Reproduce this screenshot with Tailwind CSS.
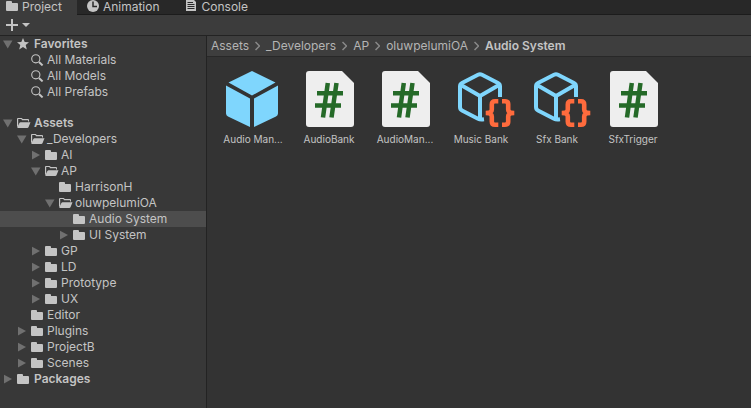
<!DOCTYPE html>
<html lang="en">
<head>
    <meta charset="utf-8">
    <meta name="viewport" content="width=device-width, initial-scale=1">
    <title>Project</title>
    <script src="https://cdn.jsdelivr.net/npm/@tailwindcss/browser@4"></script>
</head>
<body class="flex flex-col h-screen overflow-hidden bg-[#383838] text-[#c4c4c4] text-[12px] leading-4 font-['Inter',sans-serif]">

    <!-- icons -->
    <svg class="hidden">
        <symbol id="folder" viewBox="0 0 14 12">
            <path fill="#c4c4c4" d="M0 2q0-1 1-1h4q1 0 1 1v1h5q1 0 1 1v6q0 1-1 1H1q-1 0-1-1z"/>
        </symbol>
        <symbol id="folder-open" viewBox="0 0 14 12">
            <path fill="#c4c4c4" d="M0 2q0-1 1-1h3.500q1 0 1 1H11q1 0 1 1v1.500h-1V3.200H5L4.300 2H1.200v7L0 10z"/>
            <path fill="#c4c4c4" d="M3.600 5.200H13.500L11.600 10q-.4 1-1.400 1H1q-1 0-.6-1l2-4q.4-.8 1.200-.8z"/>
        </symbol>
        <symbol id="search" viewBox="0 0 14 12">
            <circle cx="4.800" cy="4.800" r="4.100" fill="none" stroke="#c4c4c4" stroke-width="1.100"/>
            <path stroke="#c4c4c4" stroke-width="2" d="M8 8l3.600 3.400"/>
        </symbol>
        <symbol id="star" viewBox="0 0 14 12">
            <path fill="#c4c4c4" d="M6 0l1.700 4 4.300.3L8.700 7.100l1.100 4.300L6 9.100l-3.800 2.300 1.100-4.300L0 4.300 4.300 4z"/>
        </symbol>
        <symbol id="down" viewBox="0 0 10 10">
            <path fill="#707070" d="M0 1.500h9.500L4.750 9.500z"/>
        </symbol>
        <symbol id="right" viewBox="0 0 10 10">
            <path fill="#707070" d="M1 .7v8.800l8-4.400z"/>
        </symbol>
        <symbol id="chevron" viewBox="0 0 5 10">
            <path fill="none" stroke="#8a8a8a" stroke-width="1.500" d="M.5 1l4 4-4 4"/>
        </symbol>
        <symbol id="prefab" viewBox="0 0 68 64">
            <path fill="#7fd6fd" d="M33 3L56.500 14.500 33 27.500 9.500 14.500zM7 17.500L31 30.500V59L9 48.500Q7 47.500 7 45.500zM59 17.500L35 30.500V59L57 48.500Q59 47.500 59 45.500z"/>
        </symbol>
        <symbol id="script" viewBox="0 0 68 64">
            <path fill="#eee" d="M14 3H47L59 15V56q0 3-3 3H14q-3 0-3-3V6q0-3 3-3z"/>
            <path fill="none" stroke="#256a28" stroke-width="4.500" d="M32.800 15L28 49.500M41.500 15L36.500 49.500M22 25.200H48M20 37.500H46"/>
        </symbol>
        <symbol id="scriptable" viewBox="0 0 68 64">
            <path fill="none" stroke="#7fd6fd" stroke-width="4" stroke-linejoin="round" d="M53 29V18.500Q53 16 51 15L35 6.800Q33 5.800 31 6.800L15 15Q13 16 13 18.500V39Q13 41.500 15 42.500L31 50.800Q33 51.800 37 51.300M14 17L33 28 52 17M33 28V51"/>
            <path fill="none" stroke="#ff6b3d" stroke-width="4.600" d="M51.300 33.300H48Q44.800 33.300 44.800 36.500V41.500Q44.800 45 38.700 45Q44.800 45 44.800 48.500V53.500Q44.800 56.700 48 56.700H51.300M55 33.300H58Q61.200 33.300 61.200 36.500V41.500Q61.200 45 67.300 45Q61.200 45 61.200 48.500V53.500Q61.200 56.700 58 56.700H55"/>
        </symbol>
    </svg>

    <!-- tabs -->
    <nav class="flex h-[15px] shrink-0 bg-[#282828] overflow-hidden" role="tablist">
        <button type="button" role="tab" aria-selected="true" class="flex gap-1 pl-[6px] pr-[15px] bg-[#3c3c3c] h-full">
            <svg class="w-3 h-3 shrink-0" viewBox="0 0 12 12"><path fill="#c4c4c4" d="M0 2q0-1 1-1h4q1 0 1 1v1h5q1 0 1 1v6q0 1-1 1H1q-1 0-1-1z"/></svg>
            <span class="-mt-px">Project</span>
        </button>
        <button type="button" role="tab" class="flex gap-1 pl-[10px] pr-[15px] border-b border-[#1c1c1c] h-full">
            <svg class="w-3 h-3 shrink-0" viewBox="0 0 12 12"><circle cx="6" cy="6" r="6" fill="#c4c4c4"/><path fill="none" stroke="#282828" stroke-width="1.500" d="M6 1.500V6.500H10"/></svg>
            <span class="-mt-px">Animation</span>
        </button>
        <button type="button" role="tab" class="flex gap-1 pl-[11px] pr-4 border-b border-[#1c1c1c] h-full">
            <svg class="w-3 h-3 shrink-0" viewBox="0 0 12 12"><path fill="#c4c4c4" d="M0 0H8L10 2V11H0z"/><path stroke="#282828" d="M1.500 2.500H7M1.500 4.500H8.500M1.500 6.500H8.500M1.500 8.500H8.500"/></svg>
            <span class="-mt-px">Console</span>
        </button>
        <div class="flex-1 border-b border-[#1c1c1c]"></div>
    </nav>

    <!-- toolbar -->
    <div class="flex items-center h-[21px] shrink-0 pl-[6px] bg-[#3c3c3c] border-b border-[#232323]">
        <button type="button" aria-label="Create" class="flex items-center gap-1">
            <svg class="w-3 h-3" viewBox="0 0 12 12"><path stroke="#c4c4c4" stroke-width="2" d="M6 0V12M0 6H12"/></svg>
            <svg class="w-2 h-1" viewBox="0 0 8 4"><path fill="#c4c4c4" d="M0 0H8L4 4z"/></svg>
        </button>
    </div>

    <main class="flex flex-1 min-h-0">

        <!-- folder tree -->
        <aside class="w-[207px] shrink-0 border-r border-[#232323] bg-[#383838] whitespace-nowrap">
            <ul class="mb-[15px]">
                <li class="flex items-center h-4 pl-[3px]"><button type="button" aria-label="Collapse" class="w-[14px]"><svg class="w-[10px] h-[10px]"><use href="#down"/></svg></button><svg class="w-[14px] h-3 mr-[3px]"><use href="#star"/></svg><a href="#" class="font-semibold">Favorites</a></li>
                <li class="flex items-center h-4 pl-[31px]"><svg class="w-[14px] h-3 mr-[2px]"><use href="#search"/></svg><a href="#">All Materials</a></li>
                <li class="flex items-center h-4 pl-[31px]"><svg class="w-[14px] h-3 mr-[2px]"><use href="#search"/></svg><a href="#">All Models</a></li>
                <li class="flex items-center h-4 pl-[31px]"><svg class="w-[14px] h-3 mr-[2px]"><use href="#search"/></svg><a href="#">All Prefabs</a></li>
            </ul>
            <ul>
                <li class="flex items-center h-4 pl-[3px]"><button type="button" aria-label="Collapse" class="w-[14px]"><svg class="w-[10px] h-[10px]"><use href="#down"/></svg></button><svg class="w-[14px] h-3 mr-[3px]"><use href="#folder-open"/></svg><a href="#" class="font-semibold">Assets</a></li>
                <li class="flex items-center h-4 pl-[17px]"><button type="button" aria-label="Collapse" class="w-[14px]"><svg class="w-[10px] h-[10px]"><use href="#down"/></svg></button><svg class="w-[14px] h-3 mr-[2px]"><use href="#folder-open"/></svg><a href="#">_Developers</a></li>
                <li class="flex items-center h-4 pl-[31px]"><button type="button" aria-label="Expand" class="w-[14px]"><svg class="w-[10px] h-[10px]"><use href="#right"/></svg></button><svg class="w-[14px] h-3 mr-[2px]"><use href="#folder"/></svg><a href="#">AI</a></li>
                <li class="flex items-center h-4 pl-[31px]"><button type="button" aria-label="Collapse" class="w-[14px]"><svg class="w-[10px] h-[10px]"><use href="#down"/></svg></button><svg class="w-[14px] h-3 mr-[2px]"><use href="#folder-open"/></svg><a href="#">AP</a></li>
                <li class="flex items-center h-4 pl-[59px]"><svg class="w-[14px] h-3 mr-[2px]"><use href="#folder"/></svg><a href="#">HarrisonH</a></li>
                <li class="flex items-center h-4 pl-[45px]"><button type="button" aria-label="Collapse" class="w-[14px]"><svg class="w-[10px] h-[10px]"><use href="#down"/></svg></button><svg class="w-[14px] h-3 mr-[2px]"><use href="#folder-open"/></svg><a href="#">oluwpelumiOA</a></li>
                <li class="flex items-center h-4 pl-[73px] bg-[#4d4d4d]"><svg class="w-[14px] h-3 mr-[2px]"><use href="#folder"/></svg><a href="#" aria-current="true">Audio System</a></li>
                <li class="flex items-center h-4 pl-[59px]"><button type="button" aria-label="Expand" class="w-[14px]"><svg class="w-[10px] h-[10px]"><use href="#right"/></svg></button><svg class="w-[14px] h-3 mr-[2px]"><use href="#folder"/></svg><a href="#">UI System</a></li>
                <li class="flex items-center h-4 pl-[31px]"><button type="button" aria-label="Expand" class="w-[14px]"><svg class="w-[10px] h-[10px]"><use href="#right"/></svg></button><svg class="w-[14px] h-3 mr-[2px]"><use href="#folder"/></svg><a href="#">GP</a></li>
                <li class="flex items-center h-4 pl-[31px]"><button type="button" aria-label="Expand" class="w-[14px]"><svg class="w-[10px] h-[10px]"><use href="#right"/></svg></button><svg class="w-[14px] h-3 mr-[2px]"><use href="#folder"/></svg><a href="#">LD</a></li>
                <li class="flex items-center h-4 pl-[31px]"><button type="button" aria-label="Expand" class="w-[14px]"><svg class="w-[10px] h-[10px]"><use href="#right"/></svg></button><svg class="w-[14px] h-3 mr-[2px]"><use href="#folder"/></svg><a href="#">Prototype</a></li>
                <li class="flex items-center h-4 pl-[31px]"><button type="button" aria-label="Expand" class="w-[14px]"><svg class="w-[10px] h-[10px]"><use href="#right"/></svg></button><svg class="w-[14px] h-3 mr-[2px]"><use href="#folder"/></svg><a href="#">UX</a></li>
                <li class="flex items-center h-4 pl-[31px]"><svg class="w-[14px] h-3 mr-[2px]"><use href="#folder"/></svg><a href="#">Editor</a></li>
                <li class="flex items-center h-4 pl-[17px]"><button type="button" aria-label="Expand" class="w-[14px]"><svg class="w-[10px] h-[10px]"><use href="#right"/></svg></button><svg class="w-[14px] h-3 mr-[2px]"><use href="#folder"/></svg><a href="#">Plugins</a></li>
                <li class="flex items-center h-4 pl-[17px]"><button type="button" aria-label="Expand" class="w-[14px]"><svg class="w-[10px] h-[10px]"><use href="#right"/></svg></button><svg class="w-[14px] h-3 mr-[2px]"><use href="#folder"/></svg><a href="#">ProjectB</a></li>
                <li class="flex items-center h-4 pl-[17px]"><button type="button" aria-label="Expand" class="w-[14px]"><svg class="w-[10px] h-[10px]"><use href="#right"/></svg></button><svg class="w-[14px] h-3 mr-[2px]"><use href="#folder"/></svg><a href="#">Scenes</a></li>
                <li class="flex items-center h-4 pl-[3px]"><button type="button" aria-label="Expand" class="w-[14px]"><svg class="w-[10px] h-[10px]"><use href="#right"/></svg></button><svg class="w-[14px] h-3 mr-[3px]"><use href="#folder"/></svg><a href="#" class="font-semibold">Packages</a></li>
            </ul>
        </aside>

        <!-- folder contents -->
        <section class="flex-1 min-w-0 bg-[#333]">
            <nav class="flex items-center gap-[6px] h-[21px] pl-1 bg-[#3e3e3e] border-b border-[#282828] text-[#b4b4b4] whitespace-nowrap">
                <a href="#">Assets</a>
                <svg class="w-[5px] h-[10px]"><use href="#chevron"/></svg>
                <a href="#">_Developers</a>
                <svg class="w-[5px] h-[10px]"><use href="#chevron"/></svg>
                <a href="#">AP</a>
                <svg class="w-[5px] h-[10px]"><use href="#chevron"/></svg>
                <a href="#">oluwpelumiOA</a>
                <svg class="w-[5px] h-[10px]"><use href="#chevron"/></svg>
                <a href="#" class="font-semibold text-[#c4c4c4]">Audio System</a>
            </nav>

            <div class="flex flex-wrap pl-2 pt-[11px] text-[10px] leading-[14px] text-center">
                <a href="#" class="w-[76px]"><svg class="w-[68px] h-16 mx-auto"><use href="#prefab"/></svg>Audio Man...</a>
                <a href="#" class="w-[76px]"><svg class="w-[68px] h-16 mx-auto"><use href="#script"/></svg>AudioBank</a>
                <a href="#" class="w-[76px]"><svg class="w-[68px] h-16 mx-auto"><use href="#script"/></svg>AudioMan...</a>
                <a href="#" class="w-[76px]"><svg class="w-[68px] h-16 mx-auto"><use href="#scriptable"/></svg>Music Bank</a>
                <a href="#" class="w-[76px]"><svg class="w-[68px] h-16 mx-auto"><use href="#scriptable"/></svg>Sfx Bank</a>
                <a href="#" class="w-[76px]"><svg class="w-[68px] h-16 mx-auto"><use href="#script"/></svg>SfxTrigger</a>
            </div>
        </section>

    </main>

</body>
</html>
